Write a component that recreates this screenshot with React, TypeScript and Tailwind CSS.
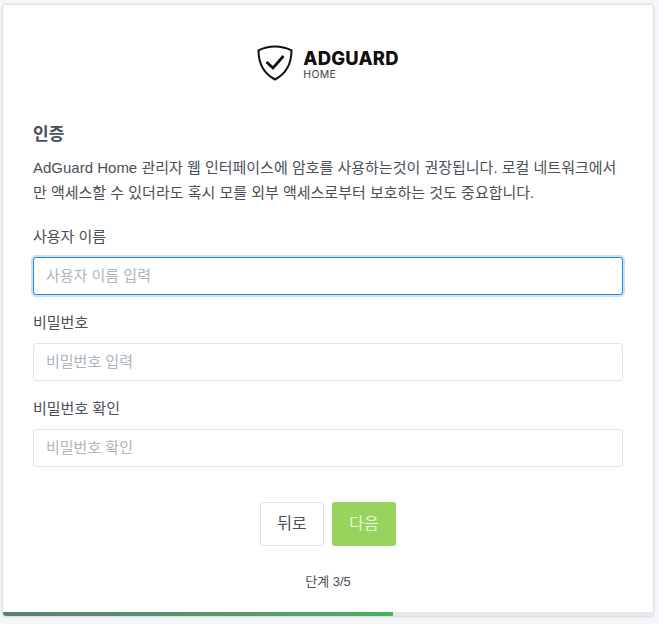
function Logo() {
  return (
    <div className="flex items-center gap-[10px]">
      <svg width="36" height="36" viewBox="0 0 36 36" fill="none" className="text-[#0f0f0f]">
        <path
          d="M18 1.5C12.5 1.5 6.5 2.9 1.5 5.3C1.5 18 5.5 28 18 34.5C30.5 28 34.5 18 34.5 5.3C29.5 2.9 23.5 1.5 18 1.5Z"
          stroke="currentColor"
          strokeWidth="2"
          strokeLinejoin="round"
        />
        <path d="M9.5 17L16 23L26.5 11" stroke="currentColor" strokeWidth="2.8" />
      </svg>
      <div className="flex flex-col pt-[4px] font-['Inter',sans-serif] text-[#0f0f0f]">
        <span className="text-[18.4px] leading-[20px] font-extrabold tracking-[0.2px]">ADGUARD</span>
        <span className="text-[10.5px] leading-[13px] tracking-[0.3px] text-[#444]">HOME</span>
      </div>
    </div>
  );
}

function Field({ label, placeholder, focused }: { label: string; placeholder: string; focused?: boolean }) {
  return (
    <div className="mb-[17px]">
      <label className="block mb-[10px] text-[15px] leading-[21px] text-[#495057]">{label}</label>
      <input
        placeholder={placeholder}
        autoFocus={focused}
        className={`block w-full h-[38px] px-[12px] pb-[2px] rounded-[3px] border bg-white text-[15px] outline-none placeholder:text-[#adb5bd] ${
          focused ? "border-[#1991eb] shadow-[0_0_0_2px_rgba(70,127,207,0.25)]" : "border-[rgba(0,40,100,0.12)]"
        }`}
      />
    </div>
  );
}

export default function App() {
  return (
    <div className="min-h-[624px] bg-[#f5f7fb] pt-[5px] pl-[3px] pr-[6px] font-['Liberation_Sans','Noto_Sans_CJK_KR',sans-serif] text-[#495057]">
      <div className="h-[611px] rounded-[3px] bg-white shadow-[0_0_3px_rgba(40,40,60,0.3)] flex flex-col overflow-hidden">
        <div className="flex-1 px-[30px]">
          <div className="flex justify-center pt-[39px]">
            <Logo />
          </div>
          <h1 className="mt-[42px] text-[17px] leading-[24px] font-bold">인증</h1>
          <p className="mt-[8px] text-[15px] leading-[25px]">
            AdGuard Home 관리자 웹 인터페이스에 암호를 사용하는것이 권장됩니다. 로컬 네트워크에서 만 액세스할 수 있더라도 혹시 모를 외부 액세스로부터 보호하는 것도 중요합니다.
          </p>
          <div className="mt-[21px]">
            <Field label="사용자 이름" placeholder="사용자 이름 입력" focused />
            <Field label="비밀번호" placeholder="비밀번호 입력" />
            <Field label="비밀번호 확인" placeholder="비밀번호 확인" />
          </div>
          <div className="mt-[35px] flex justify-center gap-[8px]">
            <button className="w-[64px] h-[44px] rounded-[3px] border border-[rgba(0,40,100,0.12)] bg-white text-[16px] text-[#495057]">
              뒤로
            </button>
            <button className="w-[64px] h-[44px] rounded-[3px] bg-[#98d35e] text-[16px] text-white/80">다음</button>
          </div>
          <div className="mt-[27px] text-center text-[13px] leading-[18px]">단계 3/5</div>
        </div>
        <div className="h-[4px] bg-[#e9e9e9]">
          <div className="h-full w-[60%] bg-linear-to-r from-[#5c7f72] to-[#4dae62]" />
        </div>
      </div>
    </div>
  );
}
